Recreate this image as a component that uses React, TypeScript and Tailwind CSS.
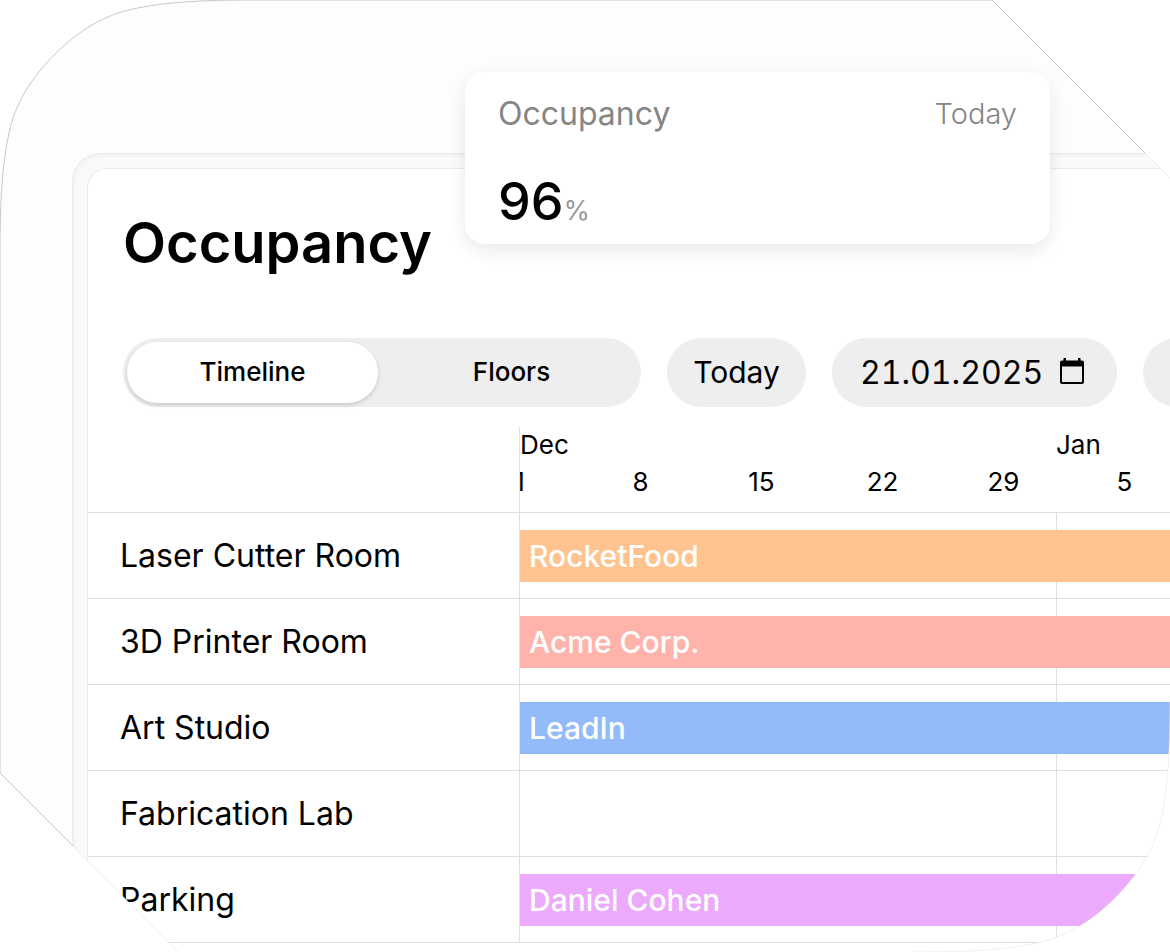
import React from "react";

const outline =
  "M0 256C0 200 2 165 9 133C15 104 31 78 55 54C78 31 104 15 133 9C165 2 200 0 256 0H992L1170 178V696C1170 752 1168 787 1161 819C1155 848 1139 874 1115 898C1092 921 1066 937 1037 943C1005 950 970 952 914 952H178L0 773Z";

const weeks = ["1", "8", "15", "22", "29", "5"];

const rooms = [
  { name: "Laser Cutter Room", tenant: "RocketFood", color: "bg-[#ffc38f]" },
  { name: "3D Printer Room", tenant: "Acme Corp.", color: "bg-[#ffb3ab]" },
  { name: "Art Studio", tenant: "LeadIn", color: "bg-[#93bbfa]" },
  { name: "Fabrication Lab", tenant: "", color: "" },
  { name: "Parking", tenant: "Daniel Cohen", color: "bg-[#ecaafd]" },
];

function CalendarIcon() {
  return (
    <svg viewBox="0 0 24 26" className="h-[26px] w-6" fill="none" aria-hidden="true">
      <path d="M3.500 0h2.500v2.500h12V0h2.500v2.500H22a2 2 0 0 1 2 2V24a2 2 0 0 1-2 2H2a2 2 0 0 1-2-2V4.500a2 2 0 0 1 2-2h1.500zM2 8.500V23.500q0 .5.5.5h19q.5 0 .5-.5V8.500z" fill="#000" fillRule="evenodd" />
    </svg>
  );
}

function StatCard() {
  return (
    <section className="absolute top-[72px] left-[465px] flex h-[172px] w-[585px] flex-col justify-between rounded-[20px] bg-white px-[33px] pt-5 pb-3 shadow-[0_6px_18px_rgba(0,0,0,0.09)]">
      <div className="flex items-center justify-between text-[#858585]">
        <h2 className="text-[32px] leading-[44px]">Occupancy</h2>
        <span className="text-[29px] leading-[44px] font-light">Today</span>
      </div>
      <p className="flex items-baseline">
        <span className="text-[52px] leading-[60px] font-medium">96</span>
        <span className="text-[27px] text-[#999999]">%</span>
      </p>
    </section>
  );
}

function Toolbar() {
  return (
    <div className="ml-[35px] flex h-[69px] gap-[26px]">
      <div className="flex w-[518px] shrink-0 rounded-full bg-[#eeeeee] p-1 text-[26px] font-medium">
        <button type="button" aria-pressed="true" className="w-[251px] rounded-full bg-white pb-0.5 shadow-[0_2px_4px_rgba(0,0,0,0.16)]">
          Timeline
        </button>
        <button type="button" aria-pressed="false" className="flex-1 rounded-full pb-0.5 pl-2">
          Floors
        </button>
      </div>
      <button type="button" className="w-[139px] shrink-0 rounded-full bg-[#eeeeee] text-[30px]">
        Today
      </button>
      <div className="flex w-[285px] shrink-0 items-center rounded-full bg-[#eeeeee] pl-7">
        <input type="text" aria-label="Date" defaultValue="21.01.2025" className="w-[200px] bg-transparent text-[32px] tabular-nums outline-none" />
        <button type="button" aria-label="Open calendar" className="pb-1">
          <CalendarIcon />
        </button>
      </div>
      <button type="button" aria-label="More filters" className="w-[139px] shrink-0 rounded-full bg-[#eeeeee]" />
    </div>
  );
}

function Timeline() {
  return (
    <table className="mt-5 w-full table-fixed border-separate border-spacing-0">
      <thead>
        <tr className="h-[86px] text-left text-[26px]">
          <th className="w-[431px] border-b border-[#dfdfdf]" aria-label="Room" />
          <th className="overflow-hidden border-b border-l border-[#dfdfdf] p-0 align-top font-normal">
            <div className="flex leading-9">
              <span className="w-[536px] shrink-0">Dec</span>
              <span>Jan</span>
            </div>
            <div className="-ml-[61px] flex leading-[38px]">
              {weeks.map((week) => (
                <span key={week} className="w-[121px] shrink-0 text-center">
                  {week}
                </span>
              ))}
            </div>
          </th>
        </tr>
      </thead>
      <tbody>
        {rooms.map((room) => (
          <tr key={room.name} className="h-[86px]">
            <th scope="row" className="border-b border-[#dfdfdf] p-0 pl-8 text-left text-[32px] font-normal">
              {room.name}
            </th>
            <td className="relative border-b border-l border-[#dfdfdf] p-0">
              <span className="absolute inset-y-0 left-[536px] w-px bg-[#dfdfdf]" />
              {room.tenant && (
                <div className={"relative h-[52px] pl-[9px] text-[30px] leading-[52px] font-medium text-white " + room.color}>
                  {room.tenant}
                </div>
              )}
            </td>
          </tr>
        ))}
      </tbody>
    </table>
  );
}

export default function App() {
  return (
    <main className="relative h-screen overflow-hidden bg-[#fdfdfd] pt-[153px] pl-[72px] font-['Inter',sans-serif] text-black">
      <div className="h-full rounded-tl-[28px] border-t border-l border-[#ebebeb] bg-[#fafafa] pt-3.5 pl-3.5 shadow-[inset_2px_2px_3px_rgba(0,0,0,0.03)]">
        <div className="h-full overflow-hidden rounded-tl-[20px] border-t border-l border-[#ebebeb] bg-white pt-9">
          <h1 className="ml-[35px] text-[56px] leading-[76px] font-semibold">Occupancy</h1>
          <div className="pt-[57px]">
            <Toolbar />
            <Timeline />
          </div>
        </div>
      </div>
      <StatCard />
      <svg viewBox="0 0 1170 952" preserveAspectRatio="none" className="pointer-events-none absolute inset-0 h-full w-full" aria-hidden="true">
        <path d={"M-2-2H1172V954H-2Z" + outline} fill="#fff" fillRule="evenodd" />
        <path d="M73 846L0 773V256C0 200 2 165 9 133C15 104 31 78 55 54C78 31 104 15 133 9C165 2 200 0 256 0H992L1145 153" fill="none" stroke="#c8c8c8" />
        <path d="M1145 153L1170 178M1170 696C1170 752 1168 787 1161 819C1155 848 1139 874 1115 898C1092 921 1066 937 1037 943C1005 950 970 952 914 952M178 952L73 846" fill="none" stroke="#e4e4e4" strokeWidth=".6" />
      </svg>
    </main>
  );
}
